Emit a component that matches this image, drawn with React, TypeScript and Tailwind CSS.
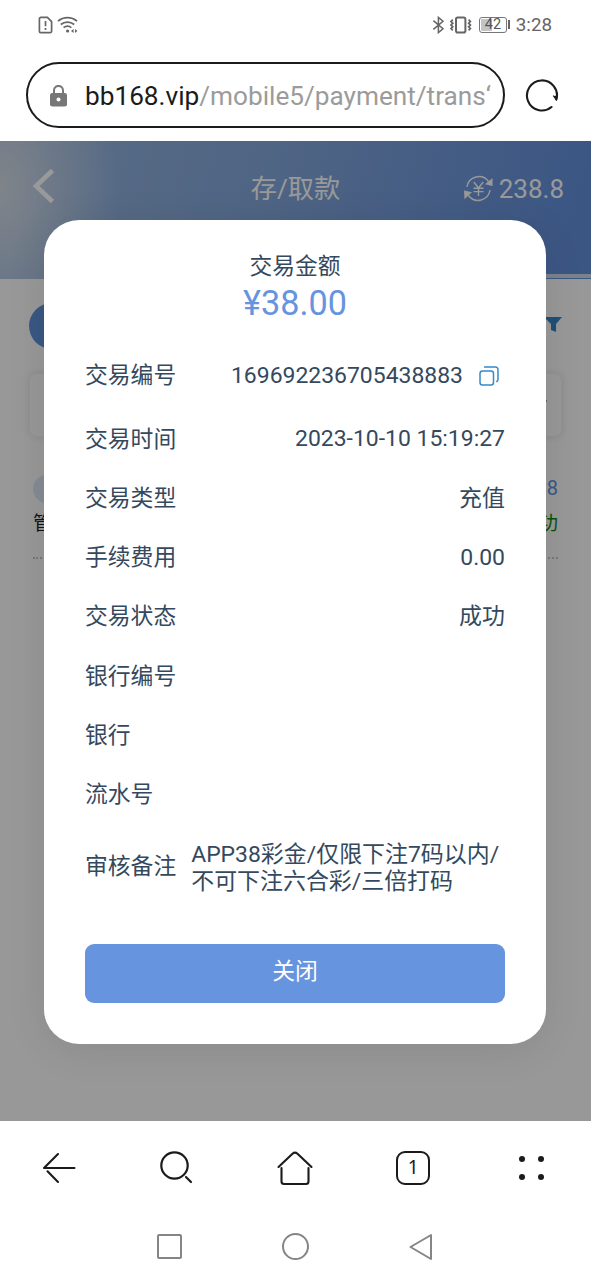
import React from "react";

interface DetailRow {
  label: string;
  value?: string;
}

const rows: DetailRow[] = [
  { label: "交易时间", value: "2023-10-10 15:19:27" },
  { label: "交易类型", value: "充值" },
  { label: "手续费用", value: "0.00" },
  { label: "交易状态", value: "成功" },
  { label: "银行编号" },
  { label: "银行" },
  { label: "流水号" },
];

const StatusBar: React.FC = () => (
  <div className="flex h-[50px] items-center justify-between pr-[39px] pl-[38px] text-[#666]">
    <div className="flex items-center gap-[4px]">
      <svg width="15" height="18" viewBox="0 0 15 18" fill="none" stroke="currentColor" strokeWidth="1.7">
        <path d="M2.8 1.4h6.6l4.2 4.2v9.6a1.4 1.4 0 0 1-1.4 1.4H2.8a1.4 1.4 0 0 1-1.4-1.4V2.8a1.4 1.4 0 0 1 1.4-1.4z" />
        <path d="M7.5 5v5.2M7.5 12v2" />
      </svg>
      <svg width="22" height="18" viewBox="0 0 22 18" fill="none" stroke="currentColor" strokeWidth="1.7">
        <path d="M1 5.2a14.5 14.5 0 0 1 19 0M3.8 8.5a10.4 10.4 0 0 1 13.4 0M6.6 11.6a6.4 6.4 0 0 1 7.8 0" />
        <circle cx="10.6" cy="15" r="1.6" fill="currentColor" stroke="none" />
        <path d="M16.6 13v4l-2.6-2zM18 13v4l2.400-2z" fill="currentColor" stroke="none" />
      </svg>
    </div>
    <div className="flex items-center">
      <svg width="13" height="18" viewBox="0 0 13 18" fill="none" stroke="currentColor" strokeWidth="1.5">
        <path d="M1.4 4.6l9.6 8.2-4.6 3.8V1.4L11 5.2l-9.6 8.2" />
      </svg>
      <svg className="ml-[4px]" width="24" height="18" viewBox="0 0 24 18" fill="none" stroke="currentColor">
        <rect x="7" y="1.4" width="9.4" height="15.2" rx="1.8" strokeWidth="2" />
        <path d="M3.8 3.6l-1.8 1.8 1.8 1.8L2 9l1.8 1.8L2 12.6l1.8 1.8M19.6 3.6l1.8 1.8-1.8 1.8L21.4 9l-1.8 1.8 1.8 1.8-1.8 1.8" strokeWidth="1.7" />
      </svg>
      <div className="ml-[6px] flex h-[16px] w-[28px] items-center rounded-[3px] border border-[#777] p-px">
        <div className="h-full w-[11px] shrink-0 rounded-l-[1px] bg-[#c4c4c4]" />
        <span className="-ml-[7px] text-[14.500px] leading-none text-[#555]">42</span>
      </div>
      <div className="ml-[1px] h-[9px] w-[2px] bg-[#666]" />
      <span className="ml-[6px] text-[18.800px] leading-none">3:28</span>
    </div>
  </div>
);

const AddressBar: React.FC = () => (
  <div className="flex h-[91px] items-start pt-[12px] pl-[26px]">
    <div className="flex h-[66px] w-[479px] items-center rounded-full border-[2.5px] border-[#1b1b1b] pl-[22px]">
      <svg className="mt-[2px]" width="17" height="22" viewBox="0 0 17 22">
        <path d="M4 9V5.4a4.500 4.500 0 0 1 9 0V9" fill="none" stroke="#777" strokeWidth="2" />
        <rect x="0" y="8" width="17" height="13.400" rx="2.200" fill="#777" />
        <circle cx="8.500" cy="14.600" r="2" fill="#fff" />
      </svg>
      <div className="mt-[2px] ml-[18px] w-[410px] overflow-hidden text-[26.200px] leading-[34px] whitespace-nowrap text-[#9b9b9b]">
        <span className="text-[#1b1b1b]">bb168.vip</span>/mobile5/payment/trans‘
      </div>
    </div>
    <svg className="mt-[16px] ml-[18.500px]" width="35" height="35" viewBox="0 0 35 35" fill="none" stroke="#1b1b1b" strokeWidth="2.100" strokeLinecap="round">
      <path d="M27.500 29A15 15 0 1 1 32.400 21.500" />
      <path d="M29.500 18l2.800 3.800 1-4.400" fill="#1b1b1b" strokeWidth="1.200" />
    </svg>
  </div>
);

const PageHeader: React.FC = () => (
  <div className="h-[138px] bg-[radial-gradient(ellipse_120px_190px_at_0%_35%,#d5dde6_0%,rgba(205,216,230,0.6)_45%,transparent_100%),linear-gradient(105deg,#97b6e0_0%,#84a8dc_45%,#6490dc_95%)]">
    <div className="flex h-[94px] items-center justify-between pr-[27px] pl-[32px] text-white">
      <svg width="24" height="36" viewBox="0 0 24 36" fill="none" stroke="currentColor" strokeWidth="4.600" className="-mt-[5px] w-[127px]" preserveAspectRatio="xMinYMid">
        <path d="M20.500 2.500L4 18l16.500 15.500" />
      </svg>
      <h1 className="mt-[2px] text-[26.200px] leading-none whitespace-nowrap">存/取款</h1>
      <div className="mt-[1px] flex w-[132px] items-center justify-end gap-[6px] whitespace-nowrap">
        <svg width="29" height="27" viewBox="0 0 29 27" fill="none" stroke="currentColor" strokeWidth="1.400">
          <path d="M3 12A12 12 0 0 1 24.500 6.500M26 15A12 12 0 0 1 4.500 20.500" />
          <path d="M28.500 3v8l-7.500-1.700zM0 15.500l8 1.700-7.500 7z" fill="currentColor" stroke="none" />
          <path d="M9.800 7l4.700 6 4.700-6M14.500 13v8M9.500 13.300h10M9.500 16.600h10" />
        </svg>
        <span className="text-[26px] leading-none">238.8</span>
      </div>
    </div>
  </div>
);

const PageBody: React.FC = () => (
  <>
    <div className="-mt-[5px] ml-[546px] h-[5px] border-b border-[#6293dd] bg-[#cbdbe8]" />
    <div className="flex h-[94px] items-center justify-between pr-[29px] pl-[29px]">
      <div className="h-[46px] w-[120px] rounded-full bg-[#6293dd]" />
      <svg className="-mt-[3px]" width="18" height="15" viewBox="0 0 18 15" fill="#3486c8">
        <path d="M0 0h18l-6 7v8l-5-2V7z" />
      </svg>
    </div>
    <div className="mr-[29px] ml-[29px] flex h-[64px] items-center justify-end rounded-lg border border-[#f4f4f4] pr-[14px] shadow-[0_0_7px_rgba(0,0,0,0.1)]">
      <div className="mb-[8px] h-[2px] w-[2px] bg-[#aaa]" />
    </div>
    <div className="mx-[33px] mt-[36px] h-[86px] border-b-2 border-dotted border-[#c8c8c8] text-[19px] leading-none">
      <div className="flex h-[32px] items-center justify-between">
        <div className="h-[28px] w-[28px] rounded-full bg-[#dce8f4]" />
        <span className="-mt-[2px] text-[20px] text-[#5b93df]">8</span>
      </div>
      <div className="mt-[9px] flex justify-between">
        <span className="text-[#222]">管</span>
        <span className="text-[#078a07]">功</span>
      </div>
    </div>
  </>
);

const CopyIcon: React.FC = () => (
  <svg width="20" height="20" viewBox="0 0 20 20" fill="none" stroke="#368ac8" strokeWidth="1.500">
    <rect x="1" y="5" width="13.500" height="14" rx="2.500" />
    <path d="M5 1h11.500a2.500 2.500 0 0 1 2.500 2.500v10a2.500 2.500 0 0 1-1.800 2.300" />
  </svg>
);

const TransactionModal: React.FC = () => (
  <div className="mr-px flex h-[824px] w-[502px] flex-col rounded-[35px] bg-white px-[41px] pt-[33px] text-[22.800px] text-[#34495e] shadow-[0_6px_40px_rgba(0,0,0,0.09)]">
    <div className="text-center leading-[27px]">交易金额</div>
    <div className="text-center text-[34.200px] leading-[46px] text-[#6694df]">¥38.00</div>
    <div className="mt-[17px] flex h-[67px] items-center justify-between">
      <span>交易编号</span>
      <span className="flex items-center gap-[16px] pr-[6px] text-[22.950px]">
        169692236705438883
        <CopyIcon />
      </span>
    </div>
    {rows.map((row) => (
      <div key={row.label} className="flex h-[59.300px] items-center justify-between">
        <span>{row.label}</span>
        {row.value && <span className="text-[22.950px]">{row.value}</span>}
      </div>
    ))}
    <div className="flex h-[85px] items-center whitespace-nowrap">
      <span>审核备注</span>
      <p className="ml-[15px] text-[22.950px] leading-[27px]">
        APP38彩金/仅限下注7码以内/
        <br />
        不可下注六合彩/三倍打码
      </p>
    </div>
    <button className="mt-auto mb-[41px] h-[59px] shrink-0 rounded-[9px] bg-[#6694df] pb-[2px] text-white">关闭</button>
  </div>
);

const BrowserNav: React.FC = () => (
  <div className="flex h-[93px] items-center justify-between pr-[40px] pl-[40px]">
    <svg width="38" height="38" viewBox="0 0 38 38" fill="none" stroke="#1b1b1b" strokeWidth="2.100" strokeLinecap="round" strokeLinejoin="round">
      <path d="M34.500 19H4L18 5M7.500 22.300L18 33" />
    </svg>
    <svg className="-ml-[4px]" width="38" height="38" viewBox="0 0 38 38" fill="none" stroke="#1b1b1b" strokeWidth="2.200" strokeLinecap="round">
      <circle cx="17.500" cy="16.500" r="13.200" />
      <path d="M29 28l5 5" />
    </svg>
    <svg className="-ml-[2px]" width="38" height="38" viewBox="0 0 38 38" fill="none" stroke="#1b1b1b" strokeWidth="2.100" strokeLinecap="round" strokeLinejoin="round">
      <path d="M2.500 18L16.500 4.700q2.500-2 5 0L35.500 18M5.500 19v13.500q0 2.500 2.500 2.500h22q2.500 0 2.500-2.500v-13.500" />
    </svg>
    <div className="flex h-[34px] w-[34px] items-center justify-center rounded-[9px] border-[2.200px] border-[#1b1b1b] pb-[1px] font-['Noto_Sans'] text-[19px] leading-none text-[#1b1b1b]">
      1
    </div>
    <div className="grid w-[38px] grid-cols-[6px_6px] gap-x-[13px] gap-y-[12px] pl-[6px]">
      <i className="h-[6px] w-[6px] rounded-full bg-[#1b1b1b]" />
      <i className="h-[6px] w-[6px] rounded-full bg-[#1b1b1b]" />
      <i className="h-[6px] w-[6px] rounded-full bg-[#1b1b1b]" />
      <i className="h-[6px] w-[6px] rounded-full bg-[#1b1b1b]" />
    </div>
  </div>
);

const SystemNav: React.FC = () => (
  <div className="flex h-[66px] items-center justify-between pr-[158px] pb-[1px] pl-[156.500px]">
    <div className="h-[25px] w-[25px] rounded-[2px] border-2 border-[#858585]" />
    <div className="h-[27px] w-[27px] rounded-full border-2 border-[#858585]" />
    <svg width="24" height="28" viewBox="0 0 24 28" fill="none" stroke="#858585" strokeWidth="2" strokeLinejoin="round">
      <path d="M22 2v24L1.500 14z" />
    </svg>
  </div>
);

const App: React.FC = () => {
  return (
    <div className="flex h-[1280px] w-[591px] flex-col overflow-hidden bg-white font-[Roboto,'Noto_Sans_CJK_SC',sans-serif]">
      <StatusBar />
      <AddressBar />
      <main className="relative h-[980px] shrink-0 overflow-hidden bg-[#fdfdfd]">
        <PageHeader />
        <PageBody />
        {/* Dimmed backdrop with the dialog on top */}
        <div className="absolute inset-0 flex justify-center bg-black/40 pt-[79px]">
          <TransactionModal />
        </div>
      </main>
      <BrowserNav />
      <SystemNav />
    </div>
  );
};

export default App;
